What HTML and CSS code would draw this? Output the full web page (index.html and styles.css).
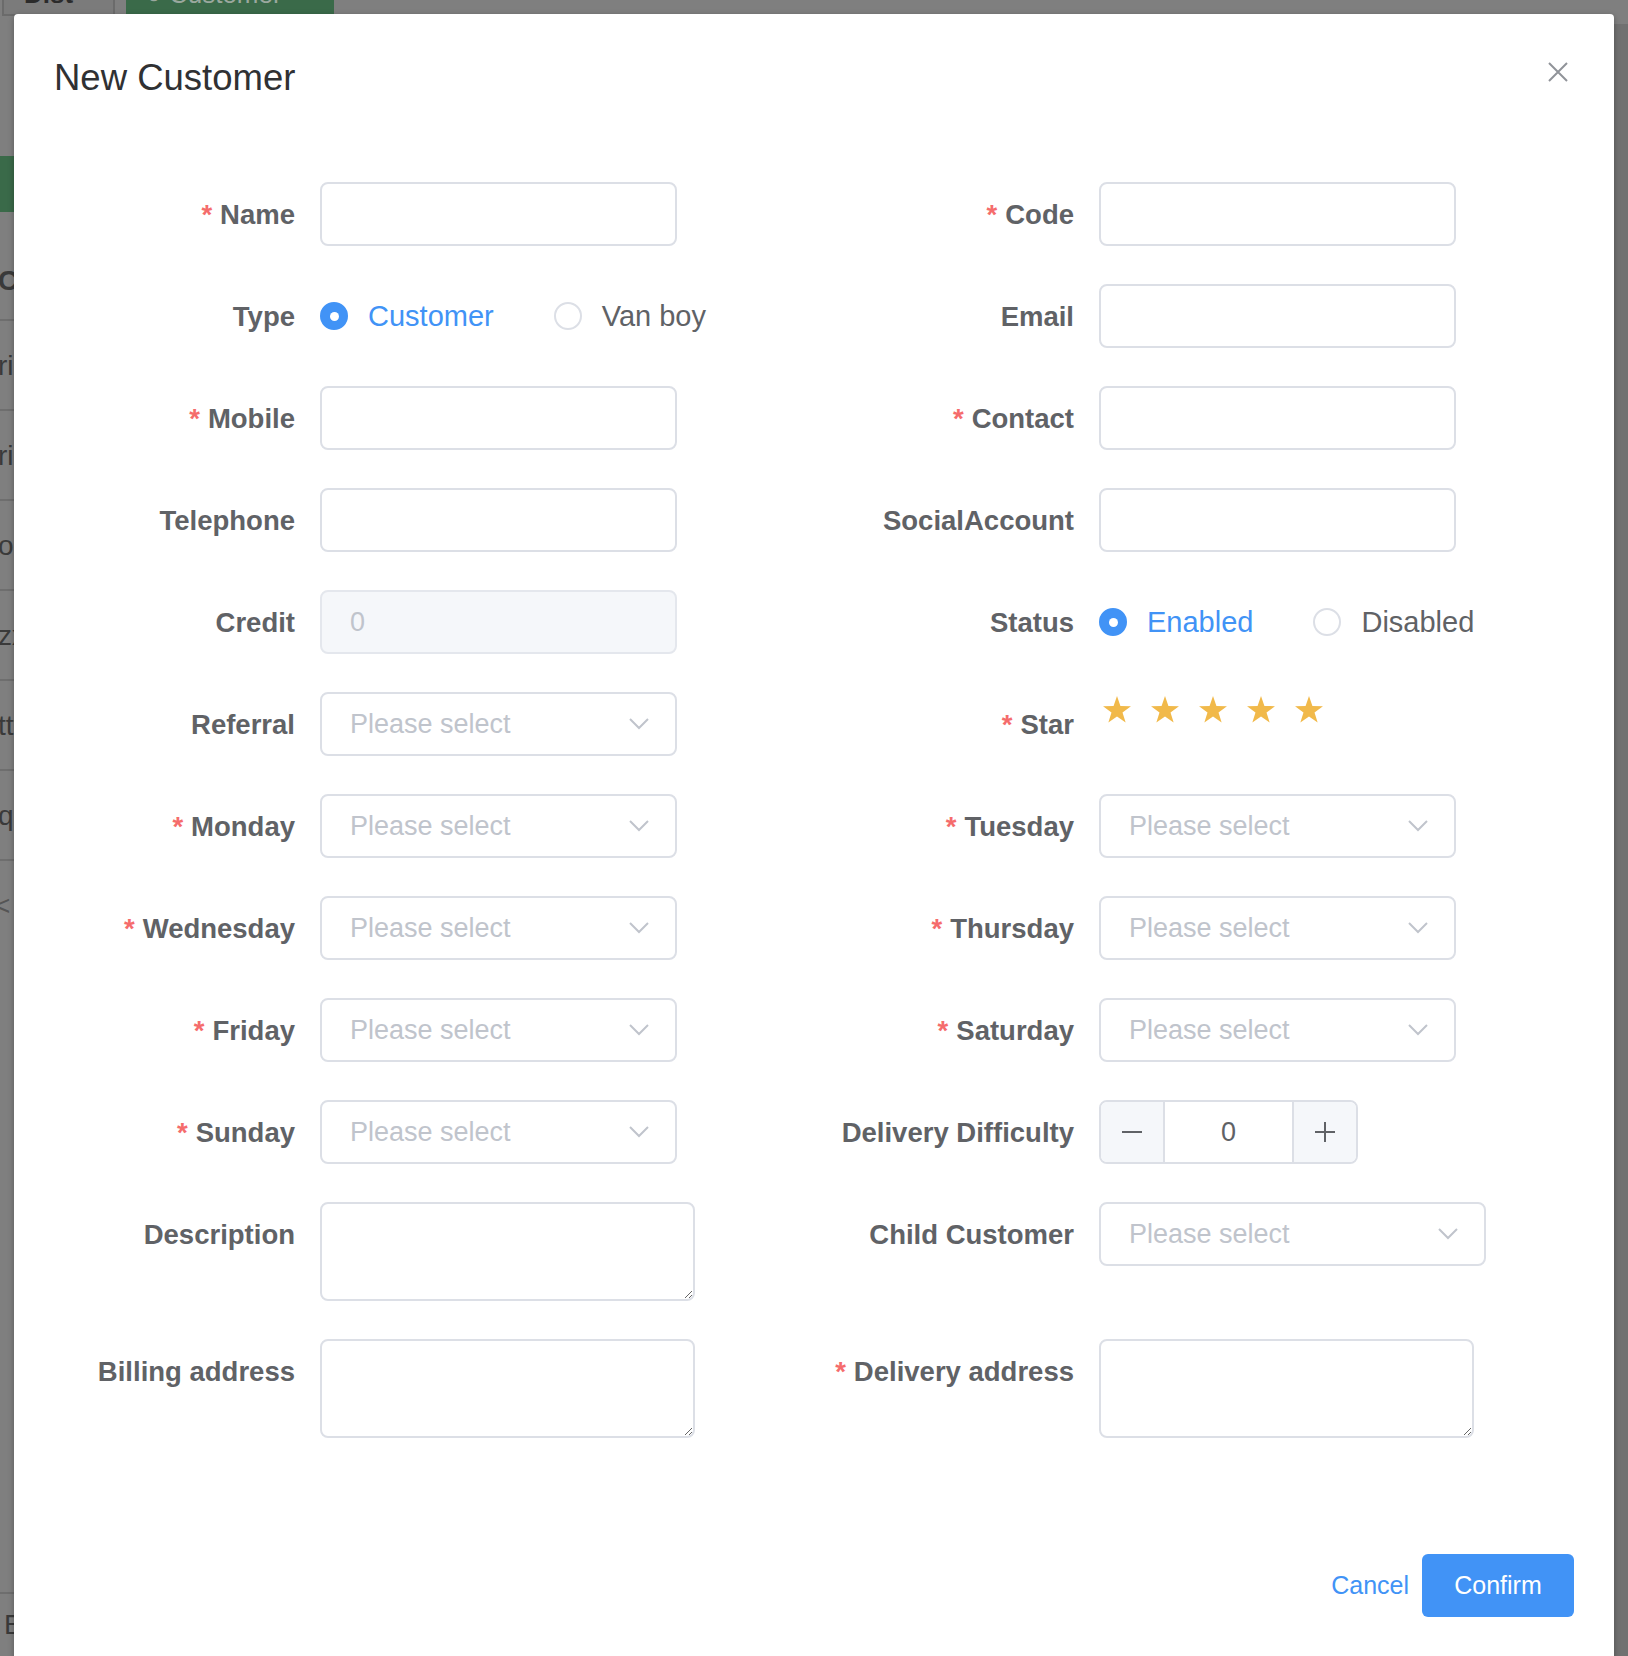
FILE: index.html
```html
<!DOCTYPE html>
<html lang="en">
<head>
  <meta charset="UTF-8">
  <title>New Customer</title>
  <link rel="stylesheet" href="styles.css">
</head>
<body>

<div class="page">
  <div class="page-main">
    <div class="tabs">
      <div class="tab tab-plain"><span>Dist</span></div>
      <div class="tab tab-active"><span>● Customer</span></div>
    </div>
    <div class="page-button">Add</div>
    <div class="table">
      <div class="table-row table-head">Code</div>
      <div class="table-row">rice</div>
      <div class="table-row">rick</div>
      <div class="table-row">ohn</div>
      <div class="table-row">zxc</div>
      <div class="table-row">ttt</div>
      <div class="table-row">qqq</div>
      <div class="pager">&lt;</div>
    </div>
    <div class="page-footer">Export</div>
  </div>
  <div class="page-side"></div>
</div>

<div class="modal">
  <div class="modal-header">
    <div class="modal-title">New Customer</div>
    <button class="modal-close" aria-label="Close">
      <svg width="20" height="20" viewBox="0 0 20 20"><path d="M1 1 L19 19 M19 1 L1 19" stroke="#909399" stroke-width="2" fill="none"/></svg>
    </button>
  </div>

  <div class="modal-body">
    <div class="form-grid">
      <div class="form-item">
        <label class="form-label required">Name</label>
        <input class="input" type="text">
      </div>
      <div class="form-item right">
        <label class="form-label required">Code</label>
        <input class="input" type="text">
      </div>

      <div class="form-item">
        <label class="form-label">Type</label>
        <div class="radio-group">
          <span class="radio checked"><span class="radio-dot"></span>Customer</span>
          <span class="radio"><span class="radio-dot"></span>Van boy</span>
        </div>
      </div>
      <div class="form-item right">
        <label class="form-label">Email</label>
        <input class="input" type="text">
      </div>

      <div class="form-item">
        <label class="form-label required">Mobile</label>
        <input class="input" type="text">
      </div>
      <div class="form-item right">
        <label class="form-label required">Contact</label>
        <input class="input" type="text">
      </div>

      <div class="form-item">
        <label class="form-label">Telephone</label>
        <input class="input" type="text">
      </div>
      <div class="form-item right">
        <label class="form-label">SocialAccount</label>
        <input class="input" type="text">
      </div>

      <div class="form-item">
        <label class="form-label">Credit</label>
        <input class="input" type="text" value="0" disabled>
      </div>
      <div class="form-item right">
        <label class="form-label">Status</label>
        <div class="radio-group">
          <span class="radio checked"><span class="radio-dot"></span>Enabled</span>
          <span class="radio"><span class="radio-dot"></span>Disabled</span>
        </div>
      </div>

      <div class="form-item">
        <label class="form-label">Referral</label>
        <div class="select"><span>Please select</span><svg class="arrow" width="20" height="12" viewBox="0 0 20 12"><path d="M1 1 L10 10 L19 1" stroke="#c0c4cc" stroke-width="2" fill="none"/></svg></div>
      </div>
      <div class="form-item right">
        <label class="form-label required">Star</label>
        <div class="rate" id="rate"></div>
      </div>

      <div class="form-item">
        <label class="form-label required">Monday</label>
        <div class="select"><span>Please select</span><svg class="arrow" width="20" height="12" viewBox="0 0 20 12"><path d="M1 1 L10 10 L19 1" stroke="#c0c4cc" stroke-width="2" fill="none"/></svg></div>
      </div>
      <div class="form-item right">
        <label class="form-label required">Tuesday</label>
        <div class="select"><span>Please select</span><svg class="arrow" width="20" height="12" viewBox="0 0 20 12"><path d="M1 1 L10 10 L19 1" stroke="#c0c4cc" stroke-width="2" fill="none"/></svg></div>
      </div>

      <div class="form-item">
        <label class="form-label required">Wednesday</label>
        <div class="select"><span>Please select</span><svg class="arrow" width="20" height="12" viewBox="0 0 20 12"><path d="M1 1 L10 10 L19 1" stroke="#c0c4cc" stroke-width="2" fill="none"/></svg></div>
      </div>
      <div class="form-item right">
        <label class="form-label required">Thursday</label>
        <div class="select"><span>Please select</span><svg class="arrow" width="20" height="12" viewBox="0 0 20 12"><path d="M1 1 L10 10 L19 1" stroke="#c0c4cc" stroke-width="2" fill="none"/></svg></div>
      </div>

      <div class="form-item">
        <label class="form-label required">Friday</label>
        <div class="select"><span>Please select</span><svg class="arrow" width="20" height="12" viewBox="0 0 20 12"><path d="M1 1 L10 10 L19 1" stroke="#c0c4cc" stroke-width="2" fill="none"/></svg></div>
      </div>
      <div class="form-item right">
        <label class="form-label required">Saturday</label>
        <div class="select"><span>Please select</span><svg class="arrow" width="20" height="12" viewBox="0 0 20 12"><path d="M1 1 L10 10 L19 1" stroke="#c0c4cc" stroke-width="2" fill="none"/></svg></div>
      </div>

      <div class="form-item">
        <label class="form-label required">Sunday</label>
        <div class="select"><span>Please select</span><svg class="arrow" width="20" height="12" viewBox="0 0 20 12"><path d="M1 1 L10 10 L19 1" stroke="#c0c4cc" stroke-width="2" fill="none"/></svg></div>
      </div>
      <div class="form-item right">
        <label class="form-label">Delivery Difficulty</label>
        <div class="number-input">
          <span class="number-btn minus"><svg width="20" height="20" viewBox="0 0 20 20"><path d="M0 10 H20" stroke="#606266" stroke-width="2"/></svg></span>
          <span class="number-value">0</span>
          <span class="number-btn plus"><svg width="20" height="20" viewBox="0 0 20 20"><path d="M0 10 H20 M10 0 V20" stroke="#606266" stroke-width="2"/></svg></span>
        </div>
      </div>

      <div class="form-item">
        <label class="form-label">Description</label>
        <textarea class="textarea"></textarea>
      </div>
      <div class="form-item right">
        <label class="form-label">Child Customer</label>
        <div class="select select-wide"><span>Please select</span><svg class="arrow" width="20" height="12" viewBox="0 0 20 12"><path d="M1 1 L10 10 L19 1" stroke="#c0c4cc" stroke-width="2" fill="none"/></svg></div>
      </div>

      <div class="form-item">
        <label class="form-label">Billing address</label>
        <textarea class="textarea"></textarea>
      </div>
      <div class="form-item right">
        <label class="form-label required">Delivery address</label>
        <textarea class="textarea"></textarea>
      </div>
    </div>
  </div>

  <div class="modal-footer">
    <button class="btn btn-text">Cancel</button>
    <button class="btn btn-primary">Confirm</button>
  </div>
</div>

<script>
const rate = document.getElementById('rate');
for (let i = 0; i < 5; i++) {
  rate.innerHTML += '<svg class="star" width="36" height="36" viewBox="0 0 36 36"><polygon points="18,4 21.41,14.01 31.98,14.16 23.52,20.49 26.64,30.59 18,24.5 9.36,30.59 12.48,20.49 4.02,14.16 14.59,14.01" fill="#f1b94a"/></svg>';
}
</script>

</body>
</html>
```

FILE: styles.css
```css
body {
  margin: 0;
  height: 1656px;
  overflow: hidden;
  font-family: "Liberation Sans", Arial, sans-serif;
  background: #7f7f7f;
}

/* page behind the dialog, dimmed */
.page {
  display: flex;
  height: 1656px;
}
.page-main {
  flex: 1;
  overflow: hidden;
}
.page-side {
  width: 14px;
  margin-top: 24px;
  background: #717171;
}
.tabs {
  display: flex;
  height: 16px;
  padding-left: 2px;
}
.tab {
  overflow: hidden;
  font-size: 26px;
  line-height: 0;
  padding: 0 20px;
  box-sizing: border-box;
}
.tab span {
  display: block;
  transform: translateY(-6px);
}
.tab-plain {
  width: 113px;
  background: #7b7b7b;
  border: 2px solid #6b6b6b;
  border-top: none;
  color: #2b2b2b;
  font-weight: bold;
}
.tab-active {
  width: 208px;
  margin-left: 11px;
  background: #3a6a49;
  color: #9aa89e;
}
.page-button {
  width: 140px;
  height: 56px;
  margin-top: 140px;
  background: #3a6a49;
  color: #9aa89e;
  font-size: 26px;
  line-height: 56px;
  text-indent: 20px;
}
.table {
  margin-top: 28px;
}
.table-row {
  height: 90px;
  line-height: 90px;
  border-bottom: 2px solid #6e6e6e;
  box-sizing: border-box;
  font-size: 28px;
  color: #3a3a3a;
  text-indent: -2px;
}
.table-head {
  height: 81px;
  line-height: 81px;
  font-weight: bold;
}
.pager {
  height: 90px;
  line-height: 90px;
  font-size: 28px;
  color: #555;
  text-indent: -6px;
}
.page-footer {
  margin-top: 641px;
  border-top: 2px solid #6e6e6e;
  font-size: 28px;
  line-height: 62px;
  color: #3a3a3a;
  text-indent: 4px;
}

/* dialog */
.modal {
  position: absolute;
  top: 14px;
  left: 14px;
  width: 1600px;
  min-height: 1700px;
  background: #fff;
  border-radius: 4px;
  box-shadow: 0 2px 6px rgba(0, 0, 0, 0.3);
}
.modal-header {
  position: relative;
  padding: 40px 40px 20px;
}
.modal-title {
  font-size: 36.5px;
  line-height: 48px;
  color: #303133;
}
.modal-close {
  position: absolute;
  top: 42px;
  right: 40px;
  width: 32px;
  height: 32px;
  padding: 0;
  border: none;
  background: none;
  display: flex;
  align-items: center;
  justify-content: center;
}
.modal-body {
  padding: 60px 40px 60px;
}
.form-grid {
  display: grid;
  grid-template-columns: 760px 760px;
  row-gap: 38px;
}
.form-item {
  display: flex;
  align-items: flex-start;
}
.form-label {
  flex-shrink: 0;
  width: 266px;
  height: 64px;
  padding: 1px 25px 0 0;
  box-sizing: border-box;
  text-align: right;
  white-space: nowrap;
  font-size: 27.5px;
  font-weight: bold;
  line-height: 64px;
  color: #606266;
}
.form-item.right .form-label {
  width: 285px;
}
.required::before {
  content: "*";
  color: #f56c6c;
  margin-right: 8px;
}

.input, .select, .textarea {
  width: 357px;
  height: 64px;
  box-sizing: border-box;
  border: 2px solid #dcdfe6;
  border-radius: 8px;
  background: #fff;
  font-family: inherit;
  font-size: 27px;
  color: #606266;
  outline: none;
}
.input {
  padding: 0 28px;
}
.input:disabled {
  background: #f5f7fa;
  border-color: #e4e7ed;
  color: #c0c4cc;
}
.select {
  display: flex;
  align-items: center;
  justify-content: space-between;
  padding: 0 26px 0 28px;
  color: #c0c4cc;
}
.select-wide {
  width: 387px;
}
.textarea {
  display: block;
  width: 375px;
  height: 99px;
  padding: 10px 28px;
  resize: vertical;
}

.radio-group {
  display: flex;
  align-items: center;
  height: 64px;
}
.radio {
  display: flex;
  align-items: center;
  margin-right: 60px;
  font-size: 29px;
  color: #606266;
}
.radio-dot {
  position: relative;
  width: 28px;
  height: 28px;
  margin-right: 20px;
  box-sizing: border-box;
  border: 2px solid #dcdfe6;
  border-radius: 50%;
}
.radio.checked {
  color: #4193f6;
}
.radio.checked .radio-dot {
  background: #4193f6;
  border-color: #4193f6;
}
.radio.checked .radio-dot::after {
  content: "";
  position: absolute;
  top: 50%;
  left: 50%;
  width: 9px;
  height: 9px;
  margin: -4.5px 0 0 -4.5px;
  border-radius: 50%;
  background: #fff;
}

.rate {
  display: flex;
  height: 40px;
}
.star {
  margin-right: 12px;
}

.number-input {
  display: flex;
  width: 259px;
  height: 64px;
  box-sizing: border-box;
  border: 2px solid #dcdfe6;
  border-radius: 8px;
  overflow: hidden;
}
.number-btn {
  width: 62px;
  display: flex;
  align-items: center;
  justify-content: center;
  background: #f5f7fa;
}
.number-btn.minus {
  border-right: 2px solid #dcdfe6;
}
.number-btn.plus {
  border-left: 2px solid #dcdfe6;
}
.number-value {
  flex: 1;
  text-align: center;
  font-size: 27px;
  line-height: 60px;
  color: #606266;
}

.modal-footer {
  display: flex;
  justify-content: flex-end;
  align-items: center;
  gap: 13px;
  padding: 56px 40px 40px;
}
.btn {
  height: 63px;
  border: none;
  font-family: inherit;
  font-size: 25px;
  cursor: pointer;
}
.btn-text {
  padding: 0;
  background: none;
  color: #4193f6;
}
.btn-primary {
  width: 152px;
  border-radius: 6px;
  background: #4193f6;
  color: #fff;
}
```
